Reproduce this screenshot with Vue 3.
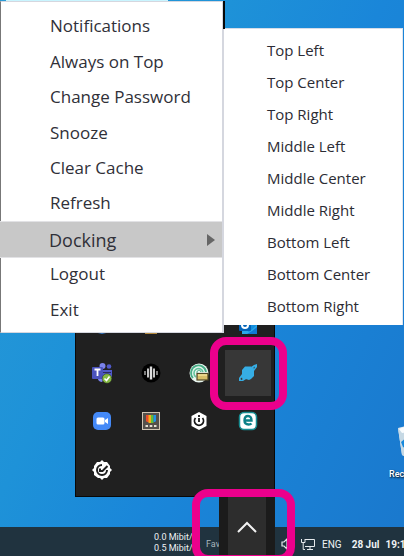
<script setup>
const menuItems = ['Notifications', 'Always on Top', 'Change Password', 'Snooze', 'Clear Cache', 'Refresh', 'Docking', 'Logout', 'Exit']
const dockItems = ['Top Left', 'Top Center', 'Top Right', 'Middle Left', 'Middle Center', 'Middle Right', 'Bottom Left', 'Bottom Center', 'Bottom Right']
</script>

<template>
  <main class="desktop">
    <a class="shortcut" href="#bin">
      <svg width="30" height="34" viewBox="0 0 30 34" aria-hidden="true">
        <path d="M1 3 14 0 29 4 26 32 14 34 5 30Z" fill="#e3ecf2" />
        <path d="M1 3 10 6 14 33 5 30Z" fill="#c5d8e4" />
        <path d="M2 4 8 2 11 7 5 8Z" fill="#f8fbfd" />
        <path d="M4 17 9 13 12 18 9 19 11 24 6 22Z" fill="#1688dc" />
      </svg>
      <span>Rec</span>
    </a>

    <section class="tray" aria-label="Hidden icons">
      <button class="cell" aria-label="Network">
        <svg width="20" height="20" viewBox="0 0 20 20"><circle cx="10" cy="10" r="10" fill="#3578c2" /></svg>
      </button>
      <button class="cell" aria-label="Files">
        <svg width="20" height="20" viewBox="0 0 20 20"><path d="M4 4H16V20H4Z" fill="#b58a3c" /></svg>
      </button>
      <button class="cell" aria-label="Bluetooth">
        <svg width="20" height="20" viewBox="0 0 20 20"><path d="M9 2 13 6 9 10 13 14 9 18Z" fill="none" stroke="#4a9be0" /></svg>
      </button>
      <button class="cell" aria-label="Outlook">
        <svg width="20" height="20" viewBox="0 0 20 20">
          <path d="M4 3H19V20H4Z" fill="#1490df" />
          <path d="M4 13 11 18 19 11V20H4Z" fill="#28a8ea" />
          <path d="M14 17 19 13V20H9Z" fill="#0f78d4" />
          <rect x="1" y="5" width="12" height="12" rx="1" fill="#0364b8" />
          <circle cx="7" cy="11" r="3" fill="none" stroke="#fff" stroke-width="2" />
        </svg>
      </button>

      <button class="cell" aria-label="Teams">
        <svg width="22" height="22" viewBox="0 0 22 22">
          <circle cx="11.500" cy="4" r="3" fill="#7b83eb" />
          <circle cx="18" cy="4.500" r="2.300" fill="#5059c9" />
          <path d="M11 8H21V15H17V19H8Q7 17 7 15Z" fill="#5059c9" />
          <path d="M12 10H20V11H12Z" fill="#2c2d5d" />
          <path d="M7 17H13L11 20Q8 20 7 17Z" fill="#7b83eb" />
          <rect x="1" y="5" width="11" height="12" rx="1" fill="#4b53bc" />
          <path d="M3.500 7.500H9.500M6.500 7.500V14" fill="none" stroke="#fff" stroke-width="1.800" />
          <circle cx="16" cy="16.500" r="4.800" fill="#85b943" stroke="#23241f" stroke-width=".5" />
          <path d="M13.500 16.500 15.500 18.500 18.500 14.500" fill="none" stroke="#fff" stroke-width="1.600" />
        </svg>
      </button>
      <button class="cell" aria-label="Audio">
        <svg width="20" height="20" viewBox="0 0 20 20">
          <circle cx="10" cy="10" r="9.500" fill="#000" />
          <path d="M4 8V12M16 8V12" stroke="#a5a5a5" stroke-width="1.500" />
          <path d="M7 5.500V14.500M13 5.500V14.500" stroke="#c5c5c5" stroke-width="2" />
          <path d="M10 3.500V16.500" stroke="#ddd" stroke-width="2.400" />
        </svg>
      </button>
      <button class="cell" aria-label="Secure connection">
        <svg width="20" height="20" viewBox="0 0 20 20">
          <circle cx="10" cy="10" r="9.500" fill="#e9f7f0" />
          <path d="M4 15A7.500 7.500 0 1 1 17 9" fill="none" stroke="#48ad87" stroke-width="1.800" />
          <path d="M7 14A4.600 4.600 0 1 1 14 9" fill="none" stroke="#62c49d" stroke-width="1.600" />
          <path d="M8.500 10.500A2 2 0 1 1 12 9" fill="none" stroke="#37a47c" />
          <rect x="8" y="10.500" width="11" height="6.500" fill="#d8bf69" stroke="#514724" stroke-width="1.200" />
          <path d="M9 12H18" stroke="#fff1b2" />
        </svg>
      </button>
      <button class="cell active" aria-label="Planet">
        <svg width="20" height="20" viewBox="0 0 20 20">
          <path d="M7 3.500H13L16 6.500V13L13 16 11 17 6 15.500 4 13V7Z" fill="#36aee5" />
          <path d="M13 4 16 2 19 1V4L16 8ZM4 11 1 15V18H5L9 15.500Z" fill="#36aee5" />
          <path d="M15.500 4.500 17 3.500 16 6ZM2.500 15.500 4 14.500 4.500 16.500 3 17Z" fill="#383838" />
        </svg>
        <span class="marker"></span>
      </button>

      <button class="cell" aria-label="Zoom">
        <svg width="18" height="18" viewBox="0 0 18 18">
          <rect width="18" height="18" rx="5" fill="#4489f7" />
          <rect x="3.500" y="5.500" width="8" height="7" rx="1.500" fill="#fff" />
          <path d="M12 8 15 6V12L12 10Z" fill="#fff" />
        </svg>
      </button>
      <button class="cell" aria-label="Color tools">
        <svg width="18" height="18" viewBox="0 0 18 18">
          <rect x=".5" y=".5" width="17" height="17" fill="#55504b" stroke="#d1c5b4" />
          <path d="M4 3H7V10H5L4 9Z" fill="#e94b2c" />
          <path d="M6.500 3H9V11H6.500Z" fill="#f8ae16" />
          <path d="M9 3H11.500V11H9Z" fill="#62bd37" />
          <path d="M11.500 3H14V9L13 10H11.500Z" fill="#2294e7" />
          <path d="M3.500 13H6V15H3.500ZM7.700 13H10.300V15H7.700ZM12 13H14.500V15H12Z" fill="#e6dfd2" />
        </svg>
      </button>
      <button class="cell" aria-label="Power">
        <svg width="18" height="18" viewBox="0 0 18 18">
          <path d="M9 0 16.500 4V14L9 18 1.500 14V4Z" fill="#fff" />
          <path d="M5.500 6A4.500 4.500 0 1 0 12.500 6" fill="none" stroke="#171717" stroke-width="1.800" />
          <path d="M9 3V5M9 6V10" stroke="#171717" stroke-width="1.800" />
        </svg>
      </button>
      <button class="cell" aria-label="ESET">
        <svg width="20" height="20" viewBox="0 0 20 20">
          <rect x="1.500" y="1.500" width="17" height="17" rx="4.500" fill="#fff" stroke="#168c91" stroke-width="1.500" />
          <path d="M6.500 9.500H13.500Q13.500 5 10 5 6.500 5 6.500 9.500 6.500 13.500 10.500 13.500 12.500 13.500 13.500 12.500" fill="none" stroke="#0c8188" stroke-width="2.400" />
        </svg>
      </button>

      <button class="cell" aria-label="Sync">
        <svg width="20" height="20" viewBox="0 0 20 20">
          <path d="M10 0 12 2H15L18 6V8L20 10 18 12V14L15 18H12L10 20 8 18H6L2 15V12L0 10 2 8V6L5 2H8Z" fill="#fff" />
          <path d="M10 5A5 5 0 1 0 15 10M8 8.500V11H10.500L15.500 6" fill="none" stroke="#202020" stroke-width="2" />
        </svg>
      </button>
    </section>

    <footer class="taskbar">
      <div class="meters">
        <p class="rates"><span>0.0 Mibit/</span><span>0.5 Mibit/</span></p>
        <span class="fav">Fav</span>
      </div>
      <div class="overflow">
        <button aria-label="Show hidden icons">
          <svg width="20" height="12" viewBox="0 0 20 12"><path d="M1 11 10 2 19 11" fill="none" stroke="#f2f2f2" stroke-width="2" /></svg>
        </button>
        <span class="marker"></span>
      </div>
      <div class="status">
        <svg width="12" height="14" viewBox="0 0 12 14" aria-label="Volume"><path d="M1 5H3L6 2V12L3 9H1ZM9 4Q11 7 9 10" fill="none" stroke="#e5eaed" stroke-width="1.200" /></svg>
        <svg width="14" height="13" viewBox="0 0 14 13" aria-label="Network"><path d="M4 1.500H13.500V8.500H4M9 8.500V11.500M6 11.500H12M.5 1V4.500H4V1M2.200 4.500V11.500H4" fill="none" stroke="#e5eaed" /></svg>
        <span class="lang">ENG</span>
        <time class="date">28 Jul</time>
        <time class="clock">19:1</time>
      </div>
    </footer>

    <nav class="menu" aria-label="Application menu">
      <button v-for="item in menuItems" :key="item" :class="{ open: item === 'Docking' }">
        <span>{{ item }}</span>
        <svg v-if="item === 'Docking'" width="8" height="12" viewBox="0 0 8 12"><path d="M0 0 8 6 0 12Z" fill="#666" /></svg>
      </button>
    </nav>
    <nav class="submenu" aria-label="Docking">
      <button v-for="item in dockItems" :key="item">{{ item }}</button>
    </nav>
  </main>
</template>

<style>
body {
  margin: 0;
}
</style>

<style scoped>
.desktop {
  position: relative;
  display: flex;
  flex-direction: column;
  justify-content: flex-end;
  min-height: 100vh;
  overflow: hidden;
  background: linear-gradient(115deg, #2a9bd6 0%, #1e92d8 35%, #1a86d9 58%, #1a78cd 100%);
  font-family: "Open Sans", "Noto Sans", sans-serif;
}
.desktop::before {
  content: "";
  position: absolute;
  top: 0;
  left: 6px;
  width: 40%;
  height: 1px;
  background: #c9f5ff;
}
button {
  margin: 0;
  padding: 0;
  border: 0;
  background: none;
  color: inherit;
  font: inherit;
  text-align: left;
}
svg {
  display: block;
  flex: none;
}
.menu {
  position: absolute;
  top: 1px;
  left: 0;
  display: grid;
  grid-auto-rows: 1fr;
  box-sizing: border-box;
  width: 224px;
  height: 332px;
  padding: 6px 0 5px;
  border: 1px solid #d5d7df;
  border-left-color: #777;
  border-right-width: 2px;
  background: #fff;
  color: #303038;
  font-size: 17px;
}
.menu button {
  display: flex;
  align-items: center;
  justify-content: space-between;
  padding: 0 7px 0 49px;
}
.menu .open {
  margin: 0 0 -2px -1px;
  padding-top: 2px;
  border: solid #e2e2e5;
  border-width: 1px 0;
  background: #c8c8c8;
  font-size: 18px;
}
.submenu {
  position: absolute;
  top: 28px;
  left: 224px;
  right: 1px;
  display: flex;
  flex-direction: column;
  padding: 5px 0 3px;
  border-top: 1px solid #d5dce8;
  border-right: 1px solid #dfe5ee;
  background: #fff;
  color: #2c2c34;
  font-size: 15px;
  line-height: 32px;
}
.submenu::before {
  content: "";
  position: absolute;
  left: -1px;
  bottom: 100%;
  width: 2px;
  height: 28px;
  background: #080808;
}
.submenu button {
  padding-left: 43px;
}
.tray {
  position: absolute;
  left: 75px;
  bottom: 59px;
  display: grid;
  grid-template-columns: repeat(4, 1fr);
  grid-template-rows: repeat(4, 1fr);
  box-sizing: border-box;
  width: 200px;
  height: 200px;
  padding: 2px;
  border: 1px solid #080808;
  background: #202020;
}
.cell {
  position: relative;
  display: flex;
  align-items: center;
  justify-content: center;
}
.cell.active {
  margin: 1px;
  background: #373737;
}
.marker {
  position: absolute;
  box-sizing: border-box;
  border: 8px solid #ec008c;
  border-radius: 16px;
}
.cell .marker {
  inset: -13px -16px -14px -15px;
}
.shortcut {
  position: absolute;
  right: 0;
  bottom: 75px;
  display: flex;
  flex-direction: column;
  align-items: flex-start;
  gap: 8px;
  width: 15px;
  color: #fff;
  font-family: Roboto, sans-serif;
  font-size: 9px;
  font-weight: 500;
  line-height: 14px;
  text-decoration: none;
  text-shadow: 1px 1px 2px #000;
  white-space: nowrap;
}
.shortcut svg {
  margin-left: 8px;
}
.taskbar {
  position: relative;
  display: flex;
  align-items: stretch;
  height: 29px;
  background: #20333f;
  color: #eef2f4;
  font-size: 11px;
  white-space: nowrap;
}
.meters {
  display: flex;
  align-items: center;
  justify-content: flex-end;
  gap: 10px;
  width: 220px;
  margin-right: -1px;
  flex: none;
  font-family: Roboto, sans-serif;
}
.rates {
  display: flex;
  flex-direction: column;
  width: 42px;
  margin: 3px 0 0;
  font-size: 9px;
  line-height: 11px;
}
.fav {
  width: 14px;
  margin-top: 5px;
  font-size: 9px;
  color: #a9b5bd;
}
.overflow {
  position: relative;
  display: flex;
  justify-content: center;
  flex: none;
  width: 56px;
  margin-top: -30px;
  background: #1b1b1b;
}
.overflow button {
  display: flex;
  align-items: center;
  justify-content: center;
  width: 38px;
  background: #2d2d2d;
}
.overflow .marker {
  inset: -8px -20px -7px -27px;
}
.status {
  display: flex;
  align-items: center;
  padding: 5px 0 0 6px;
}
.lang {
  margin: 0 10px 0 7px;
  font-family: Roboto, sans-serif;
  font-size: 10px;
}
.status svg + svg {
  margin-left: 8px;
}
.date,
.clock {
  font-family: Roboto, sans-serif;
  font-size: 10px;
  font-weight: 700;
}
.clock {
  margin-left: 6px;
}
</style>
